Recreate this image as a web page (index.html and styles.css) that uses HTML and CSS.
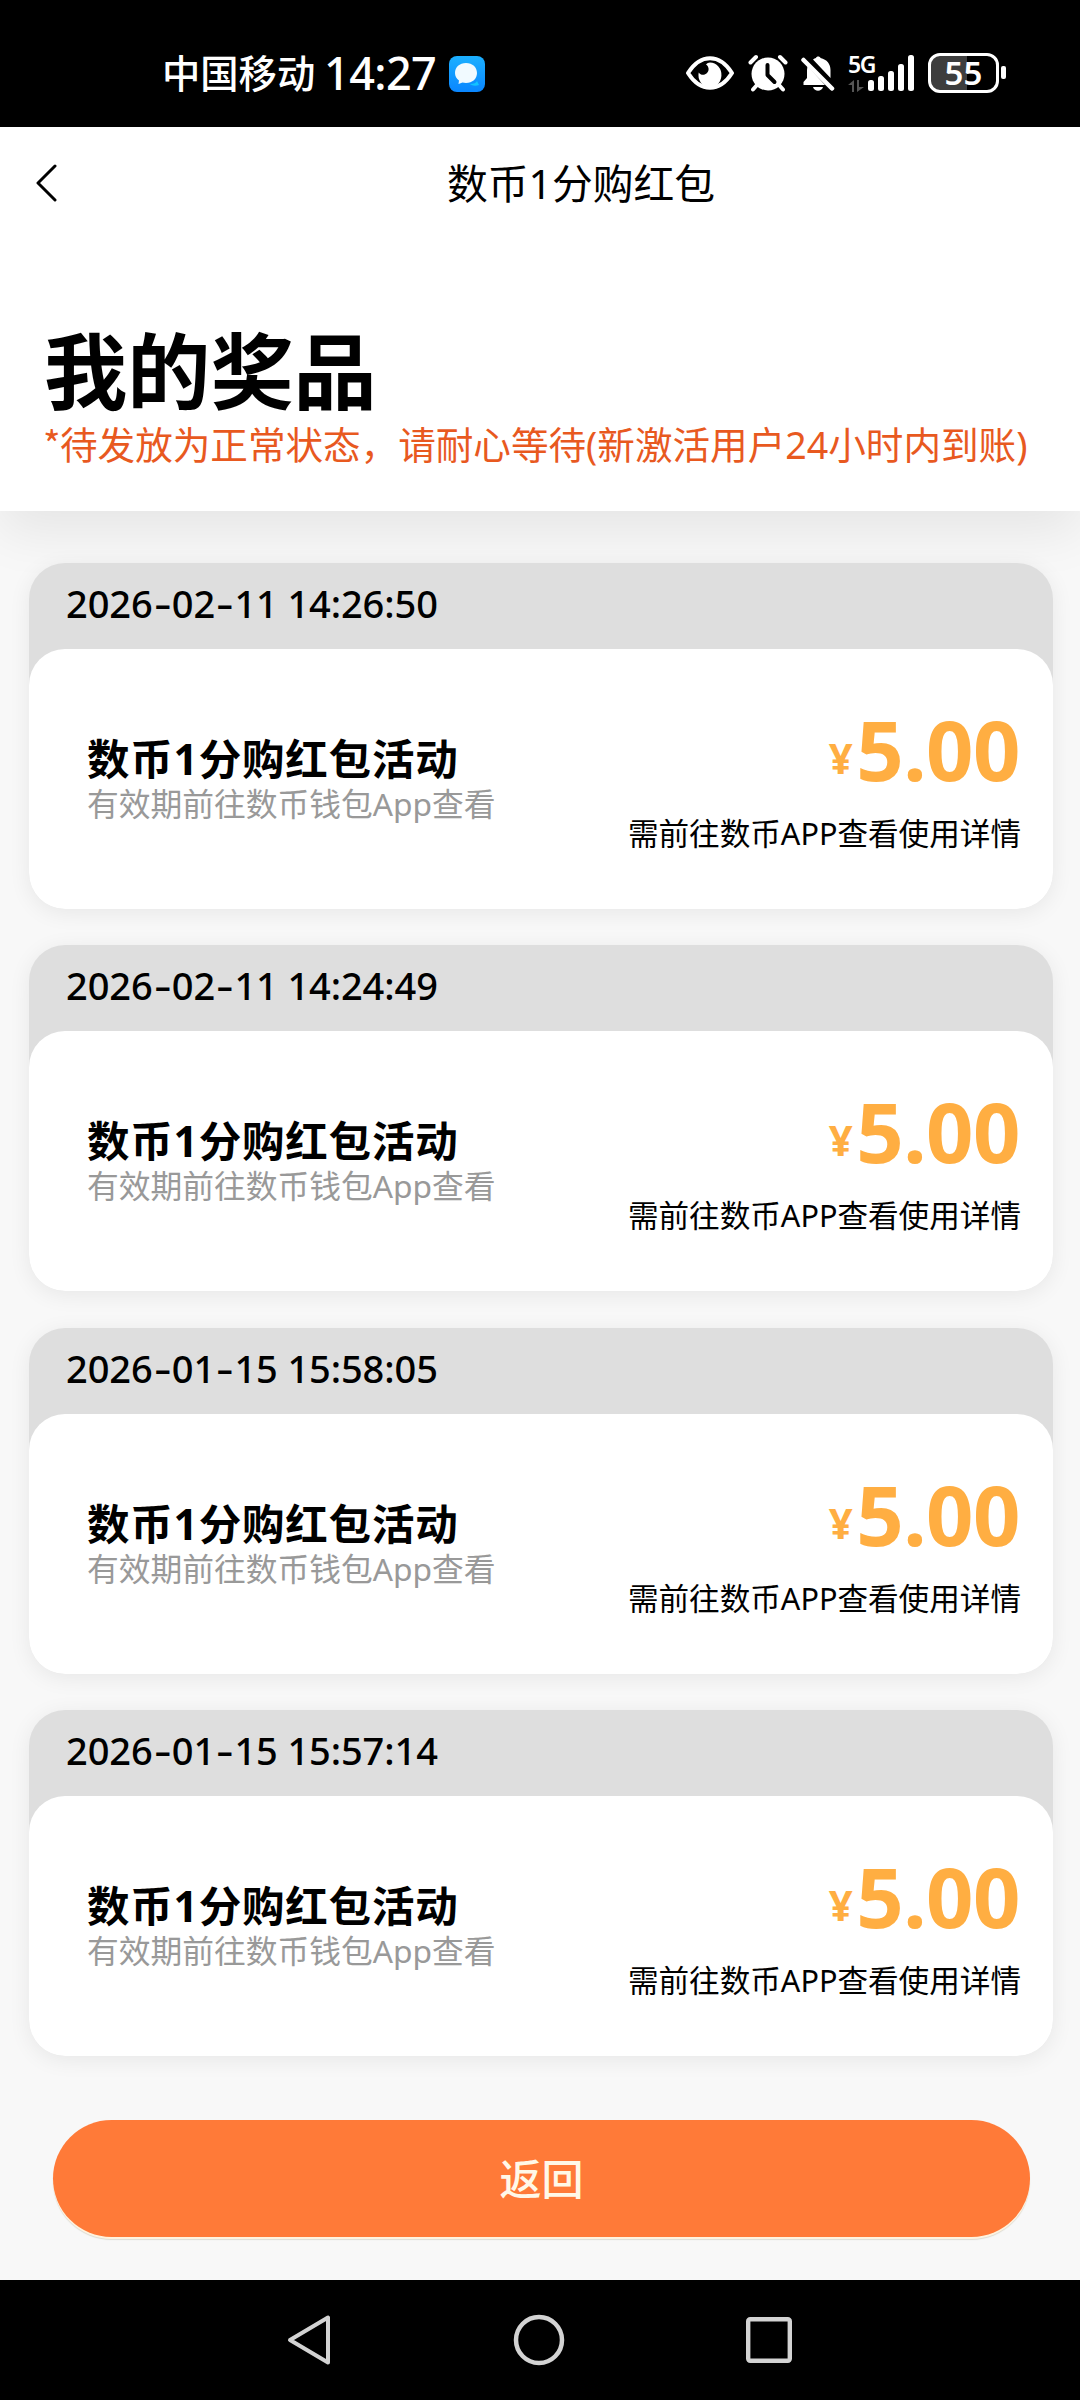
FILE: index.html
```html
<!DOCTYPE html>
<html lang="zh-CN">
<head>
<meta charset="utf-8">
<title>数币1分购红包</title>
<link rel="stylesheet" href="styles.css">
</head>
<body>
<div class="statusbar">
  <div class="status-left">
    <span class="carrier">中国移动</span>
    <span class="clock">14:27</span>
    <svg class="msg" width="36" height="36" viewBox="0 0 36 36">
      <defs><linearGradient id="blue" x1="0" y1="0" x2="0" y2="1"><stop offset="0" stop-color="#1cb0ff"/><stop offset="1" stop-color="#0a86ff"/></linearGradient></defs>
      <rect width="36" height="36" rx="8" fill="url(#blue)"/>
      <path d="M21 28c4 0 6-1 7-3l2 4c-3 1-7 1-9-1z" fill="#12c4ff"/>
      <path d="M17 7c6.500 0 11 4.300 11 10s-4.500 10-11 10c-1.300 0-2.500-.200-3.500-.500L9.500 28l.500-3.500C7.500 22.700 6 20 6 17 6 11.300 10.500 7 17 7z" fill="#f1faff"/>
    </svg>
  </div>
  <div class="status-right">
    <svg class="eye" width="48" height="34" viewBox="0 0 48 34">
      <path d="M2 17C8 7.500 15 2.200 24 2.200S40 7.500 46 17c-6 9.500-13 14.800-22 14.800S8 26.500 2 17z" fill="none" stroke="#fff" stroke-width="4" stroke-linejoin="round"/>
      <path d="M24 6.500a11.500 12.500 0 1 1-11.300 10c2 3 6 3 8.300.500 2.500-2.500 2-6.500-1-8.500 1-1.200 2.500-2 4-2z" fill="#fff"/>
    </svg>
    <svg class="alarm" width="40" height="38" viewBox="0 0 40 38">
      <g stroke="#fff" stroke-width="4" stroke-linecap="round"><path d="M2.500 8.500L8 3M37.500 8.500L32 3M9 31l-4 4.500M31 31l4 4.500"/></g>
      <circle cx="20" cy="20" r="16.500" fill="#fff"/>
      <path d="M19.500 11v10l7 7" fill="none" stroke="#000" stroke-width="4" stroke-linecap="round" stroke-linejoin="round"/>
    </svg>
    <svg class="bell" width="34" height="38" viewBox="0 0 34 38">
      <path d="M2.500 31V28L6 24V16L6.500 12L24 31z" fill="#fff"/>
      <path d="M12 5.500C13 4.700 14 4.300 15 4c.400-2 4-2 4.500 0C26 5.500 29.500 10 29.500 16v8z" fill="#fff"/>
      <path d="M12 33h10c-1.500 5-8.500 5-10 0z" fill="#fff"/>
      <path d="M2.500 6L31 34.500" stroke="#fff" stroke-width="4.500" stroke-linecap="round"/>
    </svg>
    <div class="network">
      <span class="gen">5G</span>
      <svg width="17" height="12" viewBox="0 0 17 12"><path d="M0 5L6 0v12H4V5zM8 0v12M9 0h2v7h5l-7 5z" fill="#555"/></svg>
    </div>
    <svg class="signal" width="46" height="36" viewBox="0 0 46 36" fill="#fff">
      <rect x="0" y="25" width="6" height="11" rx="2.500"/><rect x="10" y="21" width="6" height="15" rx="2.500"/><rect x="20" y="16" width="6" height="20" rx="2.500"/><rect x="30" y="9" width="6" height="27" rx="2.500"/><rect x="40" y="0" width="6" height="36" rx="2.500"/>
    </svg>
    <div class="battery">55</div>
    <div class="nub"></div>
  </div>
</div>

<header class="top">
  <div class="navbar">
    <svg class="back" width="22" height="38" viewBox="0 0 22 38"><path d="M20 2L3 19l17 17" fill="none" stroke="#000" stroke-width="3" stroke-linecap="round" stroke-linejoin="round"/></svg>
    <div class="page-title">数币1分购红包</div>
  </div>
  <h1 class="heading">我的奖品</h1>
  <p class="notice"><span class="star">*</span>待发放为正常状态，请耐心等待(新激活用户24小时内到账)</p>
</header>

<main class="list">
  <section class="card">
    <div class="date">2026<i>-</i>02<i>-</i>11 14:26:50</div>
    <div class="body">
      <div class="info"><div class="name">数币1分购红包活动</div><div class="valid">有效期前往数币钱包App查看</div></div>
      <div class="value"><div class="price"><span class="yen">¥</span>5.00</div><div class="hint">需前往数币APP查看使用详情</div></div>
    </div>
  </section>
  <section class="card">
    <div class="date">2026<i>-</i>02<i>-</i>11 14:24:49</div>
    <div class="body">
      <div class="info"><div class="name">数币1分购红包活动</div><div class="valid">有效期前往数币钱包App查看</div></div>
      <div class="value"><div class="price"><span class="yen">¥</span>5.00</div><div class="hint">需前往数币APP查看使用详情</div></div>
    </div>
  </section>
  <section class="card">
    <div class="date">2026<i>-</i>01<i>-</i>15 15:58:05</div>
    <div class="body">
      <div class="info"><div class="name">数币1分购红包活动</div><div class="valid">有效期前往数币钱包App查看</div></div>
      <div class="value"><div class="price"><span class="yen">¥</span>5.00</div><div class="hint">需前往数币APP查看使用详情</div></div>
    </div>
  </section>
  <section class="card">
    <div class="date">2026<i>-</i>01<i>-</i>15 15:57:14</div>
    <div class="body">
      <div class="info"><div class="name">数币1分购红包活动</div><div class="valid">有效期前往数币钱包App查看</div></div>
      <div class="value"><div class="price"><span class="yen">¥</span>5.00</div><div class="hint">需前往数币APP查看使用详情</div></div>
    </div>
  </section>
  <button class="return">返回</button>
</main>

<nav class="sysnav">
  <svg width="46" height="52" viewBox="0 0 46 52"><path d="M42 3.500v45L4 26z" fill="none" stroke="#d3d3d3" stroke-width="4" stroke-linejoin="round"/></svg>
  <svg width="52" height="52" viewBox="0 0 52 52"><circle cx="26" cy="26" r="23" fill="none" stroke="#d3d3d3" stroke-width="4.500"/></svg>
  <svg width="46" height="46" viewBox="0 0 46 46"><rect x="2.200" y="2.200" width="41.600" height="41.600" rx="2" fill="none" stroke="#d3d3d3" stroke-width="4.400"/></svg>
</nav>
</body>
</html>
```
FILE: styles.css
```css
* { box-sizing: border-box; }

body {
  margin: 0;
  width: 1080px;
  height: 2400px;
  overflow: hidden;
  display: flex;
  flex-direction: column;
  background: #f8f8f8;
  color: #000;
  font-family: "Noto Sans", "Noto Sans CJK SC", sans-serif;
}

/* Status bar */
.statusbar {
  height: 127px;
  padding: 20px 74px 0 162px;
  background: #000;
  color: #fff;
  display: flex;
  justify-content: space-between;
}
.status-left, .status-right { display: flex; height: 107px; }
.carrier { font-size: 38.300px; font-weight: 500; line-height: 106px; width: 162px; white-space: nowrap; }
.clock { font-size: 45px; font-weight: 500; line-height: 106px; letter-spacing: -0.6px; width: 125px; white-space: nowrap; }
.msg { margin-top: 36px; }
.eye { margin: 36px 14px 0 0; }
.alarm { margin: 34px 13px 0 0; }
.bell { margin: 34px 13px 0 0; }
.network { width: 20px; display: flex; flex-direction: column; margin-top: 34px; }
.gen { font-size: 23px; font-weight: 600; line-height: 20px; height: 26px; letter-spacing: -1.500px; }
.signal { margin: 35px 14px 0 0; }
.battery {
  width: 71px;
  height: 40px;
  margin-top: 33px;
  border: 3.500px solid #fff;
  border-radius: 12px;
  background: linear-gradient(90deg, #3d3d3d 56%, #000 56%);
  font: 600 33px/33px "Noto Sans", sans-serif;
  text-align: center;
}
.nub { width: 5px; height: 13px; margin: 46px 0 0 2px; border-radius: 2px; background: #fff; }

/* Page header */
.top {
  height: 384px;
  background: #fff;
  box-shadow: 0 20px 50px rgba(0, 0, 0, .08);
}
.navbar { height: 112px; display: flex; align-items: center; padding-left: 35px; }
.back { margin-right: 390px; }
.page-title { font-size: 40.800px; line-height: 112px; white-space: nowrap; }
.heading { margin: 82px 0 0 44px; font-size: 83.200px; font-weight: 700; line-height: 100px; }
.notice { margin: 3px 0 0 43px; color: #e8591f; font-size: 37.600px; line-height: 40px; white-space: nowrap; }
.star { display: inline-block; width: 17px; font-family: "Noto Sans CJK SC", sans-serif; line-height: 1; }

/* Prize cards */
.list {
  height: 1769px;
  padding: 52px 27px 0 29px;
  display: flex;
  flex-direction: column;
  gap: 36.330px;
}
.card {
  height: 346px;
  flex: none;
  border-radius: 36px;
  background: #dedede;
  box-shadow: 0 4px 22px rgba(0, 0, 0, .07);
}
.date { height: 86px; padding-left: 37px; font-size: 38px; font-weight: 500; line-height: 81px; letter-spacing: -0.100px; white-space: nowrap; }
.date i { display: inline-block; width: 19.300px; text-align: center; font-style: normal; transform: scaleX(1.400); }
.body {
  height: 260px;
  padding: 0 32px 0 58px;
  border-radius: 36px;
  background: #fff;
  display: flex;
  justify-content: space-between;
  white-space: nowrap;
}
.info { padding-top: 85px; }
.name { font-size: 42.500px; font-weight: 700; line-height: 50px; letter-spacing: 0.800px; }
.valid { color: #999; font-size: 31.750px; line-height: 39px; }
.value { display: flex; flex-direction: column; align-items: flex-end; padding-top: 50px; }
.price { display: flex; color: #ffae42; font-size: 83px; font-weight: 700; line-height: 100px; letter-spacing: -0.500px; padding-right: 1px; }
.yen { font-size: 42px; line-height: 118px; margin-right: 4px; }
.hint { font-size: 30.600px; line-height: 40px; margin-top: -4px; }

.return {
  flex: none;
  width: 977px;
  height: 117px;
  margin: 28px 0 0 24px;
  padding: 0;
  border: 0;
  border-radius: 59px;
  background: #ff7a38;
  box-shadow: 0 2px 0 #fff3df, 0 3px 1px #dcdcd4;
  color: #fff8e8;
  font: 500 42px/117px "Noto Sans", "Noto Sans CJK SC", sans-serif;
}

/* System navigation */
.sysnav {
  height: 120px;
  padding: 0 288px 0 286px;
  background: #000;
  display: flex;
  align-items: center;
  justify-content: space-between;
}
```
